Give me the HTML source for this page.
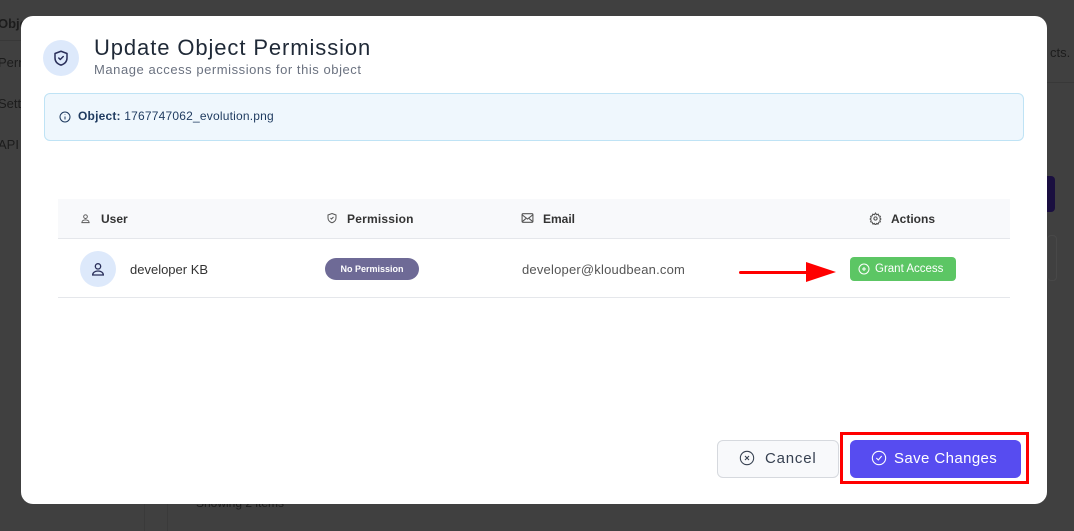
<!DOCTYPE html>
<html style="background:#404040"><head><style>
*{box-sizing:border-box;margin:0;padding:0}
body{width:1074px;height:531px;background:#404040;font-family:"Liberation Sans",sans-serif;position:relative;overflow:hidden}
.a{position:absolute}
.bgt{color:#1c1c1c;font-size:13px}
.modal{left:21px;top:16px;width:1026px;height:488px;background:#fff;border-radius:12px}
</style></head><body>
<div class="a" style="left:0;top:0;width:1074px;height:531px;background:#404040"></div>
<div class="a" style="left:0;top:40px;width:22px;height:1px;background:#383838"></div>
<div class="a bgt" style="left:-2px;top:16px;font-weight:bold">Obje</div>
<div class="a bgt" style="left:-2px;top:55px">Perm</div>
<div class="a bgt" style="left:-2px;top:96px">Setti</div>
<div class="a bgt" style="left:-2px;top:137px">API A</div>
<div class="a bgt" style="left:1050px;top:45px">cts.</div>
<div class="a" style="left:1047px;top:82px;width:27px;height:1px;background:#383838"></div>
<div class="a" style="left:1040px;top:176px;width:15px;height:36px;background:#1a0f40;border-radius:4px"></div>
<div class="a" style="left:1047px;top:235px;width:10px;height:46px;border:1px solid #484848;border-radius:4px"></div>
<div class="a" style="left:144px;top:500px;width:1px;height:31px;background:#3a3a3a"></div>
<div class="a" style="left:167px;top:500px;width:1px;height:31px;background:#3a3a3a"></div>
<div class="a bgt" style="left:196px;top:496px;font-size:12px">Showing 2 items</div>

<div class="a modal"></div>
<div class="a" style="left:43px;top:40px;width:36px;height:36px;border-radius:50%;background:#dde9fb"></div>
<svg class="a" style="left:52px;top:49px" width="18" height="18" viewBox="0 0 24 24" fill="none" stroke="#2a2f5a" stroke-width="2" stroke-linecap="round" stroke-linejoin="round"><path d="M12 3l8 3v6c0 5-3.5 8-8 9.5C7.5 20 4 17 4 12V6z"/><path d="M9 12l2 2 4-4"/></svg>
<div class="a" style="left:94px;top:35px;font-size:22px;color:#1f2937;letter-spacing:0.9px">Update Object Permission</div>
<div class="a" style="left:94px;top:62px;font-size:13px;color:#6b7280;letter-spacing:0.55px">Manage access permissions for this object</div>

<div class="a" style="left:44px;top:93px;width:980px;height:48px;background:#eff7fd;border:1px solid #bfe3f5;border-radius:6px"></div>
<svg class="a" style="left:59px;top:111px" width="12" height="12" viewBox="0 0 24 24" fill="none" stroke="#1e3a5f" stroke-width="2"><circle cx="12" cy="12" r="10"/><path d="M12 11v6M12 7v1"/></svg>
<div class="a" style="left:78px;top:109px;font-size:12px;color:#1e3a5f;letter-spacing:0.2px"><b>Object:</b> 1767747062_evolution.png</div>

<div class="a" style="left:58px;top:199px;width:952px;height:40px;background:#f8f9fb;border-bottom:1px solid #e5e7eb"></div>
<div class="a" style="left:58px;top:297px;width:952px;height:1px;background:#e5e7eb"></div>
<svg class="a" style="left:80px;top:213px" width="11" height="11" viewBox="0 0 24 24" fill="none" stroke="#555" stroke-width="2"><circle cx="12" cy="8" r="4"/><path d="M4 21c0-4 4-6 8-6s8 2 8 6z"/></svg>
<div class="a" style="left:101px;top:212px;font-size:12px;font-weight:bold;color:#333">User</div>
<svg class="a" style="left:326px;top:212px" width="12" height="12" viewBox="0 0 24 24" fill="none" stroke="#555" stroke-width="2"><path d="M12 3l8 3v6c0 5-3.5 8-8 9.5C7.5 20 4 17 4 12V6z"/><path d="M9 12l2 2 4-4"/></svg>
<div class="a" style="left:347px;top:212px;font-size:12px;font-weight:bold;color:#333;letter-spacing:0.2px">Permission</div>
<svg class="a" style="left:521px;top:212px" width="13" height="12" viewBox="0 0 24 22" fill="none" stroke="#555" stroke-width="2"><rect x="2" y="3" width="20" height="16" rx="2"/><path d="M2 5l10 8 10-8M2 18l7-6M22 18l-7-6"/></svg>
<div class="a" style="left:543px;top:212px;font-size:12px;font-weight:bold;color:#333">Email</div>
<svg class="a" style="left:869px;top:212px" width="13" height="13" viewBox="0 0 24 24" fill="none" stroke="#555" stroke-width="2"><circle cx="12" cy="12" r="3"/><path d="M12 2l2 3 3-1 1 3 3 1-1 3 2 2-2 2 1 3-3 1-1 3-3-1-2 3-2-3-3 1-1-3-3-1 1-3-2-2 2-2-1-3 3-1 1-3 3 1z"/></svg>
<div class="a" style="left:891px;top:212px;font-size:12px;font-weight:bold;color:#333">Actions</div>

<div class="a" style="left:80px;top:251px;width:36px;height:36px;border-radius:50%;background:#dde9fb"></div>
<svg class="a" style="left:90px;top:261px" width="16" height="16" viewBox="0 0 24 24" fill="none" stroke="#2a2f5a" stroke-width="2"><circle cx="12" cy="8" r="4"/><path d="M4 21c0-4 4-6 8-6s8 2 8 6z"/></svg>
<div class="a" style="left:130px;top:262px;font-size:13px;color:#333">developer KB</div>
<div class="a" style="left:325px;top:258px;width:94px;height:22px;border-radius:11px;background:#6e6a96;color:#fff;font-size:9px;font-weight:bold;text-align:center;line-height:22px">No Permission</div>
<div class="a" style="left:522px;top:262px;font-size:13px;color:#555;letter-spacing:0.2px">developer@kloudbean.com</div>
<div class="a" style="left:739px;top:271px;width:70px;height:3px;background:#f00;border-radius:2px"></div>
<div class="a" style="left:806px;top:262px;width:0;height:0;border-left:30px solid #f00;border-top:10px solid transparent;border-bottom:10px solid transparent"></div>
<div class="a" style="left:850px;top:257px;width:106px;height:24px;background:#5cc664;border-radius:4px;color:#fff;font-size:11.5px;line-height:24px;padding-left:25px">Grant Access</div>
<svg class="a" style="left:858px;top:263px" width="12" height="12" viewBox="0 0 24 24" fill="none" stroke="#fff" stroke-width="2"><circle cx="12" cy="12" r="10"/><path d="M12 8v8M8 12h8"/></svg>

<div class="a" style="left:717px;top:440px;width:122px;height:38px;background:#f8f9fb;border:1px solid #d6d9de;border-radius:6px;color:#374151;font-size:15px;line-height:36px;padding-left:47px;letter-spacing:0.8px">Cancel</div>
<svg class="a" style="left:739px;top:450px" width="16" height="16" viewBox="0 0 24 24" fill="none" stroke="#374151" stroke-width="1.6"><circle cx="12" cy="12" r="10"/><path d="M9 9l6 6M15 9l-6 6"/></svg>
<div class="a" style="left:840px;top:432px;width:189px;height:52px;border:3px solid #f00"></div>
<div class="a" style="left:850px;top:440px;width:171px;height:38px;background:#574cf0;border-radius:6px;color:#fff;font-size:15px;line-height:38px;padding-left:44px;letter-spacing:0.4px">Save Changes</div>
<svg class="a" style="left:871px;top:450px" width="16" height="16" viewBox="0 0 24 24" fill="none" stroke="#fff" stroke-width="1.6"><circle cx="12" cy="12" r="10"/><path d="M8 12l3 3 5-6"/></svg>
</body></html>
